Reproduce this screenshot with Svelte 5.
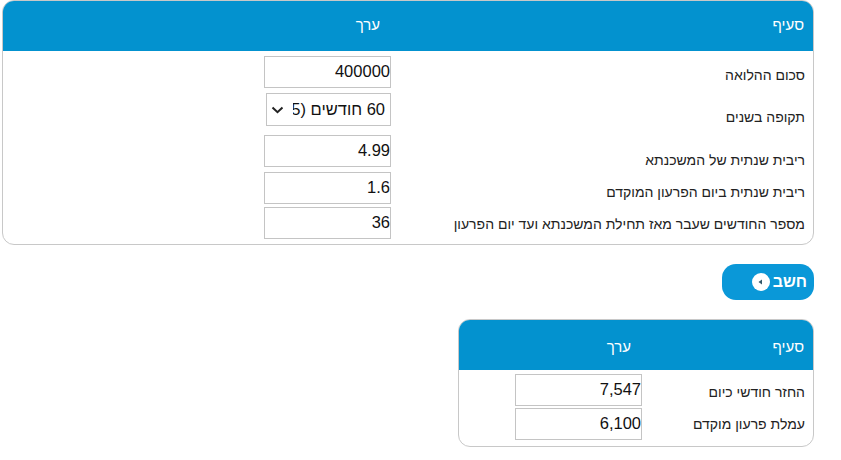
<script>
  const inputRows = [
    { label: 'סכום ההלואה', value: '400000', cls: 'r1' },
    { label: 'תקופה בשנים', select: true, cls: 'r2' },
    { label: 'ריבית שנתית של המשכנתא', value: '4.99', cls: 'r3' },
    { label: 'ריבית שנתית ביום הפרעון המוקדם', value: '1.6', cls: 'r4' },
    { label: 'מספר החודשים שעבר מאז תחילת המשכנתא ועד יום הפרעון', value: '36', cls: 'r5' }
  ];

  const resultRows = [
    { label: 'החזר חודשי כיום', value: '7,547', cls: 'o1' },
    { label: 'עמלת פרעון מוקדם', value: '6,100', cls: 'o2' }
  ];
</script>

<main dir="rtl">
  <section class="panel">
    <div class="head">
      <span class="h-label">סעיף</span>
      <span class="h-value">ערך</span>
    </div>
    {#each inputRows as row}
      <div class="row {row.cls}">
        <span class="label">{row.label}</span>
        {#if row.select}
          <div class="pick-wrap">
            <select class="pick">
              <option>60 חודשים (5 שנים)</option>
            </select>
            <svg class="chev" width="13" height="8" viewBox="0 0 13 8">
              <path d="M1.5 1.5 6.5 6.2 11.5 1.5" fill="none" stroke="#222" stroke-width="2" />
            </svg>
          </div>
        {:else}
          <input class="num" type="text" value={row.value} />
        {/if}
      </div>
    {/each}
  </section>

  <div class="actions">
    <button type="button" class="calc">
      חשב
      <svg width="18" height="18" viewBox="0 0 18 18">
        <circle cx="9" cy="9" r="9" fill="#fff" />
        <path d="M6.5 9 10 6.5v5z" fill="#33586a" />
      </svg>
    </button>
  </div>

  <section class="panel small">
    <div class="head">
      <span class="h-label">סעיף</span>
      <span class="h-value">ערך</span>
    </div>
    {#each resultRows as row}
      <div class="row {row.cls}">
        <span class="label">{row.label}</span>
        <input class="num" type="text" readonly value={row.value} />
      </div>
    {/each}
  </section>
</main>

<style>
  :global(body) {
    margin: 0;
    background: #fff;
    font-family: "Liberation Sans", Arial, sans-serif;
  }
  main {
    width: 812px;
    margin-left: 2px;
    color: #222;
    font-size: 14px;
  }
  .panel {
    border: 1px solid #c8c8c8;
    border-radius: 12px;
    overflow: hidden;
    height: 243px;
  }
  .panel.small {
    width: 354px;
    height: 126px;
    margin-top: 19px;
    --label-col: 171px;
    --head-col: 182px;
  }
  .head {
    display: flex;
    height: 50px;
    background: #0392cf;
    color: #fff;
    font-size: 15px;
  }
  .h-label {
    width: var(--head-col, 433px);
    padding: 15px 9px 0 0;
    box-sizing: border-box;
  }
  .h-value {
    padding-top: 15px;
  }
  .panel.small .h-label,
  .panel.small .h-value {
    padding-top: 18px;
  }
  .row {
    display: grid;
    grid-template-columns: var(--label-col, 422px) auto;
    justify-content: start;
    align-items: start;
  }
  .label {
    padding-right: 8px;
    line-height: 16px;
  }
  .num {
    width: 127px;
    height: 32px;
    box-sizing: border-box;
    border: 1px solid #c4c4c4;
    border-radius: 0;
    padding: 0 0 2px;
    margin: 0;
    font: 16.5px "Liberation Sans", Arial, sans-serif;
    color: #111;
    text-align: right;
    direction: ltr;
    background: #fff;
    outline: none;
  }
  .pick-wrap {
    position: relative;
    width: 125px;
    height: 33px;
  }
  .pick {
    appearance: none;
    width: 125px;
    height: 33px;
    box-sizing: border-box;
    border: 1px solid #c4c4c4;
    border-radius: 0;
    background: #fff;
    font: 16.5px "Liberation Sans", Arial, sans-serif;
    color: #111;
    margin: 0;
    padding: 0 5px 1px 26px;
  }
  .chev {
    position: absolute;
    left: 5px;
    top: 13px;
    pointer-events: none;
  }
  .r1 { height: 42px; padding-top: 5px; box-sizing: border-box; }
  .r1 .label { padding-top: 11px; }
  .r2 { height: 42px; box-sizing: border-box; }
  .r2 .label { padding-top: 16px; }
  .r3 { height: 37px; box-sizing: border-box; }
  .r3 .label { padding-top: 17px; }
  .r4 { height: 35px; box-sizing: border-box; }
  .r4 .label { padding-top: 12px; }
  .r5 { height: 37px; box-sizing: border-box; }
  .r5 .label { padding-top: 9px; }
  .o1 { height: 38px; padding-top: 4px; box-sizing: border-box; }
  .o1 .label { padding-top: 10px; }
  .o2 { height: 34px; box-sizing: border-box; }
  .o2 .label { padding-top: 8px; }
  .actions {
    display: flex;
    margin-top: 19px;
  }
  .calc {
    display: flex;
    align-items: center;
    gap: 3px;
    width: 92px;
    height: 36px;
    padding: 0 7px 0 0;
    border: none;
    border-radius: 14px;
    background: #0a98d8;
    color: #fff;
    font: bold 16px "Liberation Sans", Arial, sans-serif;
  }
</style>
